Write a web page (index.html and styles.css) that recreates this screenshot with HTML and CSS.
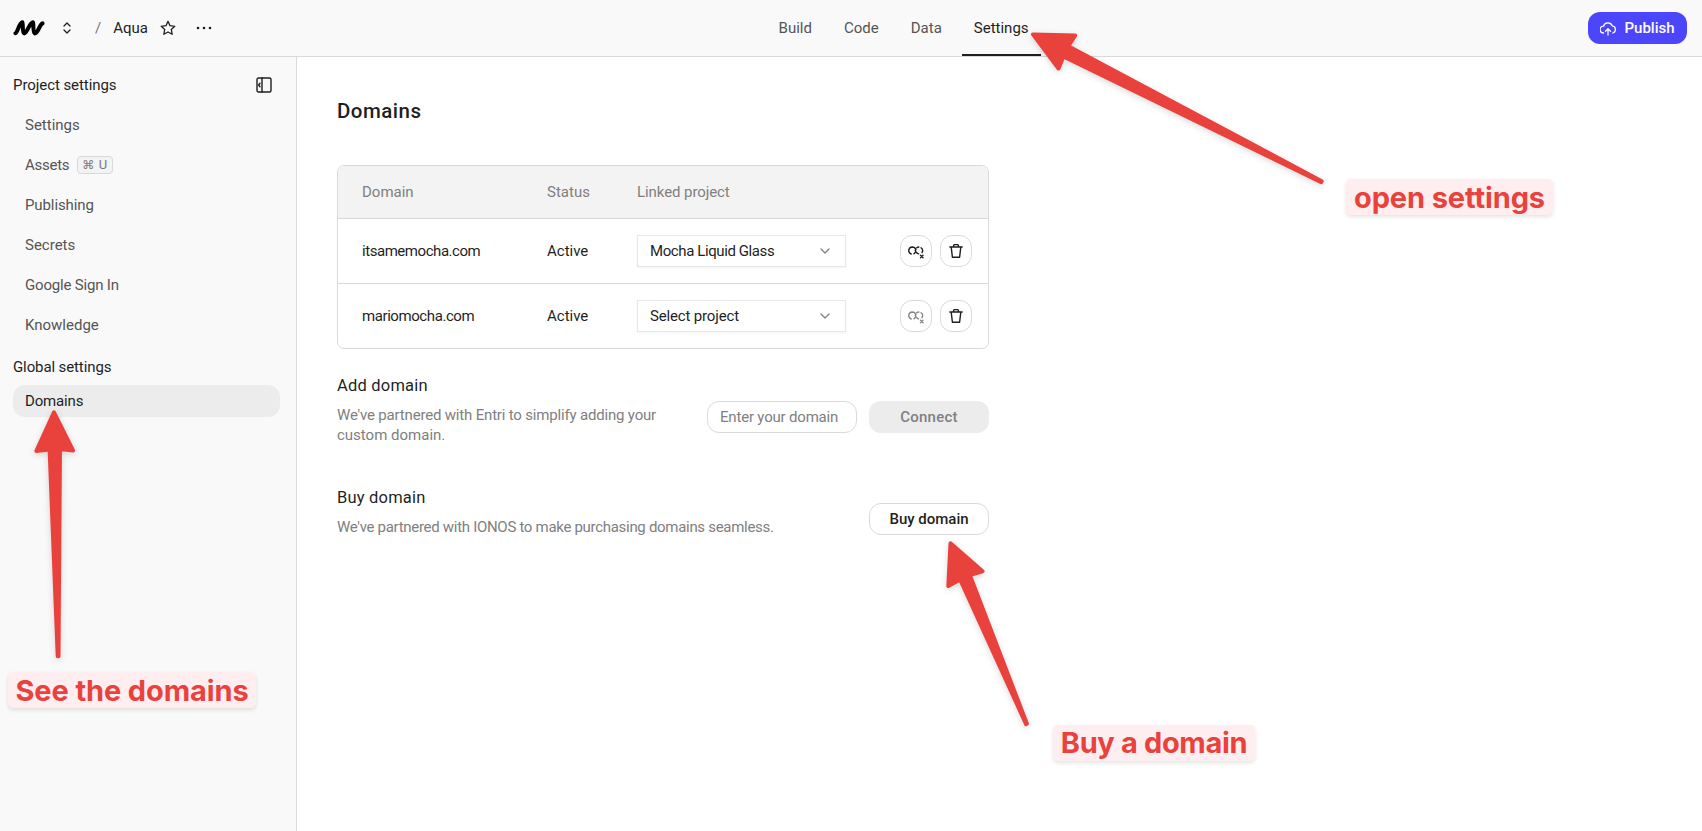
FILE: index.html
```html
<!DOCTYPE html>
<html lang="en">
<head>
<meta charset="utf-8">
<title>Domains</title>
<link rel="stylesheet" href="styles.css">
</head>
<body>
<svg class="defs" width="0" height="0">
  <symbol id="chevron" viewBox="0 0 10 6"><path d="M1 1l4 4 4-4"/></symbol>
  <symbol id="trash" viewBox="0 0 16 16"><path d="M1.800 4h12.400M5.200 3.800l.9-2.200h3.800l.9 2.200M3.200 4.200l1.200 10h7.200l1.200-10"/></symbol>
  <symbol id="unlink" viewBox="0 0 16 16"><path d="M3.200 11A3.600 3.600 0 0 1 4.200 4C6.400 4 7.300 5 8 6.600M6 10.800A3.600 3.600 0 0 0 7 9.600M7.200 7.400C7.800 9.200 8.800 10.700 10.600 10.900M8.800 4.800A3.600 3.600 0 0 1 10.800 4M13 4.800A3.600 3.600 0 0 1 14 9.600M12.500 12.300l2.500 2.500M15 12.300l-2.500 2.500"/></symbol>
</svg>
<header class="topbar">
  <div class="crumbs">
    <svg class="logo" viewBox="0 0 32 18"><path d="M2.500 14.200C5 13 6 4 9.300 3.200C10.500 7 9 13 11.200 14.400C15 13 16 4 20 3.200C21 7 19.500 13 22 14.400C26 13 26 6 29.500 4.400"/></svg>
    <svg class="updown" viewBox="0 0 8 12"><path d="M1 4l3-3 3 3M1 8l3 3 3-3"/></svg>
    <span class="slash">/</span>
    <span class="project">Aqua</span>
    <svg class="star" viewBox="0 0 16 16"><path d="M8 1.300l2 4.400 4.800.6-3.500 3.200.9 4.800L8 12l-4.200 2.300.9-4.800L1.200 6.300 6 5.700z"/></svg>
    <svg class="dots" viewBox="0 0 16 4"><circle cx="2" cy="2" r="1.300"/><circle cx="8" cy="2" r="1.300"/><circle cx="14" cy="2" r="1.300"/></svg>
  </div>
  <nav class="tabs">
    <a class="tab">Build</a><a class="tab">Code</a><a class="tab">Data</a><a class="tab tab-active">Settings</a>
  </nav>
  <button class="publish"><svg viewBox="0 0 16 15"><path d="M3.500 12A3.400 3.400 0 0 1 3.500 5.200A4.600 4.600 0 0 1 12.200 4.800A3.700 3.700 0 0 1 12.800 12M8 14V8M5.500 10.200L8 7.700l2.500 2.500"/></svg><span>Publish</span></button>
</header>
<div class="body">
  <aside class="sidebar">
    <div class="side-head"><span>Project settings</span>
      <svg viewBox="0 0 16 16"><rect x="1" y="1" width="14" height="14" rx="1.500"/><path d="M6 1v14M4 6.200L2.600 8 4 9.800"/></svg>
    </div>
    <a class="item">Settings</a>
    <a class="item s-assets"><span>Assets</span><kbd><span class="cmd">⌘</span><span>U</span></kbd></a>
    <a class="item s-publishing">Publishing</a>
    <a class="item">Secrets</a>
    <a class="item s-google">Google Sign In</a>
    <a class="item">Knowledge</a>
    <div class="side-sub">Global settings</div>
    <a class="item item-active">Domains</a>
  </aside>
  <main class="main">
    <h1>Domains</h1>
    <section class="table">
      <div class="row row-head"><span>Domain</span><span>Status</span><span class="h-linked">Linked project</span></div>
      <div class="row">
        <span class="d-its">itsamemocha.com</span><span>Active</span>
        <div class="select"><span class="v-mocha">Mocha Liquid Glass</span><svg><use href="#chevron"/></svg></div>
        <div class="actions"><button class="round"><svg><use href="#unlink"/></svg></button><button class="round"><svg><use href="#trash"/></svg></button></div>
      </div>
      <div class="row">
        <span class="d-mario">mariomocha.com</span><span>Active</span>
        <div class="select"><span class="v-select">Select project</span><svg><use href="#chevron"/></svg></div>
        <div class="actions"><button class="round muted"><svg><use href="#unlink"/></svg></button><button class="round"><svg><use href="#trash"/></svg></button></div>
      </div>
    </section>
    <section class="block add">
      <div><h2>Add domain</h2><p class="p-add">We've partnered with Entri to simplify adding your<br><span class="p-last">custom domain.</span></p></div>
      <div class="form"><div class="input">Enter your domain</div><button class="btn connect">Connect</button></div>
    </section>
    <section class="block buy">
      <div><h2>Buy domain</h2><p class="p-buy">We've partnered with IONOS to make purchasing domains seamless.</p></div>
      <button class="btn outline">Buy domain</button>
    </section>
  </main>
</div>
<svg class="arrows" viewBox="0 0 1702 831">
  <path d="M54 412.300L73 450.500L60 449L58.500 656.200H57.700L49.600 449.500L36.300 451z"/>
  <path d="M1033 34.400L1075.200 35.400L1068.300 46.200L1321.700 181.200L1321.200 182.200L1063.400 56.500L1058.500 68.500z"/>
  <path d="M950.500 543.300L982.500 571.300L969.800 575L1026.900 723.600L1026.100 724.200L960.200 579.600L948.300 586z"/>
</svg>
<div class="note note-see">See the domains</div>
<div class="note note-open">open settings</div>
<div class="note note-buy">Buy a domain</div>
</body>
</html>
```
FILE: styles.css
```css
* { box-sizing: border-box; }
body { margin: 0; height: 831px; overflow: hidden; background: #fff; color: #1f1f1f; font: 15px/20px Roboto, "Liberation Sans", sans-serif; position: relative; }
.defs { display: none; }
svg { fill: none; stroke: currentColor; stroke-linecap: round; stroke-linejoin: round; flex: none; }
button { font: inherit; padding: 0; margin: 0; }
h1, h2, p { margin: 0; }
.topbar { height: 57px; background: #f9f9f9; border-bottom: 1px solid #dadada; display: grid; grid-template-columns: 767px auto 1fr; align-items: stretch; }
.crumbs { display: flex; align-items: center; padding-left: 13px; }
.logo { width: 32px; height: 18px; color: #000; stroke-width: 4; }
.updown { width: 8px; height: 12px; margin-left: 18px; stroke-width: 1.3; }
.slash { color: #777; margin-left: 24px; }
.project { margin-left: 12px; }
.star { width: 16px; height: 16px; margin-left: 12px; stroke-width: 1.3; }
.dots { width: 18px; height: 4px; margin-left: 19px; fill: currentColor; stroke: none; }
.tabs { display: flex; margin-left: -.4px; }
.tab { padding: 18px 12px 0; margin-right: 8px; color: #555; height: 56px; }
.tab-active { color: #1f1f1f; margin-right: 0; border-bottom: 2px solid #1f1f1f; }
.publish { justify-self: end; margin: 12px 15px 0 0; width: 99px; height: 32px; border: 0; border-radius: 12px; background: #4b45fb; color: #fff; font-weight: 500; display: flex; align-items: center; justify-content: center; gap: 8px; }
.publish svg { width: 16px; height: 15px; stroke-width: 1.3; }
.body { display: flex; height: 774px; }
.sidebar { width: 297px; background: #f9f9f9; border-right: 1px solid #dadada; padding: 12px 16px 0 13px; }
.side-head { height: 32px; display: flex; justify-content: space-between; align-items: center; padding-right: 8px; margin-bottom: 8px; letter-spacing: -.07px; }
.side-head svg { width: 16px; height: 16px; stroke-width: 1.4; }
.item { height: 32px; margin-bottom: 8px; border-radius: 12px; padding: 0 12px; display: flex; align-items: center; color: #555; }
.s-assets { letter-spacing: -.27px; }
.s-publishing { letter-spacing: -.1px; }
.s-google { letter-spacing: -.19px; }
kbd { font: 13px/16px Roboto, "DejaVu Sans", sans-serif; letter-spacing: 0; height: 18px; width: 36px; margin-left: 8px; border: 1px solid #d9d9d9; border-radius: 4px; background: #f3f3f3; color: #777; display: flex; justify-content: space-between; align-items: center; padding: 0 5px 0 4px; }
.cmd { font-size: 12px; }
.side-sub { height: 32px; display: flex; align-items: center; margin: 10px 0 2px; letter-spacing: -.11px; }
.item-active { background: #ececec; color: #1f1f1f; letter-spacing: -.15px; }
.main { flex: 1; padding: 42px 0 0 40px; }
h1 { font-size: 20.5px; line-height: 24px; font-weight: 500; letter-spacing: .48px; margin-bottom: 42px; }
.table { width: 652px; border: 1px solid #dadada; border-radius: 7px; overflow: hidden; }
.row { height: 65px; display: grid; grid-template-columns: 185px 90px 209px 1fr; align-items: center; padding: 0 16px 0 24px; border-bottom: 1px solid #dadada; }
.row:last-child { height: 64px; border-bottom: 0; }
.row-head { height: 53px; background: #f3f3f3; color: #808080; }
.h-linked { letter-spacing: -.08px; }
.d-its { letter-spacing: -.45px; }
.d-mario { letter-spacing: -.42px; }
.v-mocha { letter-spacing: -.4px; }
.v-select { letter-spacing: -.16px; }
.select { height: 32px; width: 209px; border: 1px solid #e8e8e8; box-shadow: 0 1px 2px #0000000d; display: flex; align-items: center; justify-content: space-between; padding: 0 15px 0 12px; }
.select svg { width: 10px; height: 6px; color: #808080; stroke-width: 1.3; }
.actions { display: flex; justify-content: flex-end; gap: 8px; }
.round { width: 32px; height: 32px; border: 1px solid #dadada; border-radius: 12px; background: #fff; color: #1f1f1f; display: grid; place-items: center; }
.round svg { width: 16px; height: 16px; stroke-width: 1.4; }
.muted { color: #888; }
.block { width: 652px; display: flex; justify-content: space-between; }
h2 { font-size: 16.5px; line-height: 24px; font-weight: 450; letter-spacing: .2px; margin-bottom: 7px; }
p { color: #808080; }
.p-add { letter-spacing: -.18px; }
.p-last { letter-spacing: 0; }
.p-buy { letter-spacing: -.3px; }
.add { margin-top: 25px; height: 112px; }
.form { display: flex; gap: 12px; margin-top: 27px; }
.input { width: 150px; height: 32px; border: 1px solid #dadada; border-radius: 12px; padding: 5px 12px; color: #808080; white-space: nowrap; letter-spacing: -.19px; }
.btn { width: 120px; height: 32px; border-radius: 12px; font-weight: 500; }
.connect { border: 0; background: #ececec; color: #808080; letter-spacing: .2px; }
.outline { border: 1px solid #dadada; background: #fff; color: #1f1f1f; margin-top: 17px; }
.arrows { position: absolute; inset: 0; width: 1702px; height: 831px; fill: #e9423d; stroke: #e9423d; stroke-width: 4; filter: drop-shadow(0 2px 3px #00000026); }
.note { position: absolute; height: 36px; border-radius: 5px; background: #feeeef; color: #e9423d; font: 700 29px/36px Inter, sans-serif; letter-spacing: -.12px; text-align: center; white-space: nowrap; box-shadow: 0 2px 4px #0000001c; }
.note-see { left: 8px; top: 672px; width: 248px; line-height: 38px; }
.note-open { left: 1346px; top: 179px; width: 207px; line-height: 38px; }
.note-buy { left: 1053px; top: 725px; width: 202px; letter-spacing: -.35px; }
```
